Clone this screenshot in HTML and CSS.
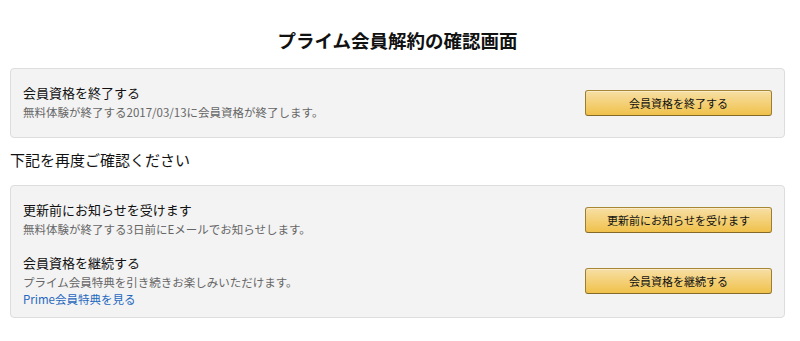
FILE: index.html
```html
<!DOCTYPE html>
<html lang="ja">
<head>
    <meta charset="UTF-8">
    <meta name="viewport" content="width=device-width, initial-scale=1.0">
    <title>プライム会員解約の確認画面</title>
    <link rel="stylesheet" href="styles.css">
</head>
<body>
    <div class="page">
        <h1 class="page-title">プライム会員解約の確認画面</h1>

        <div class="box box-first">
            <div class="row">
                <div class="row-text">
                    <div class="row-heading">会員資格を終了する</div>
                    <div class="row-sub">無料体験が終了する2017/03/13に会員資格が終了します。</div>
                </div>
                <button class="btn">会員資格を終了する</button>
            </div>
        </div>

        <h2 class="section-title">下記を再度ご確認ください</h2>

        <div class="box box-second">
            <div class="row">
                <div class="row-text">
                    <div class="row-heading">更新前にお知らせを受けます</div>
                    <div class="row-sub">無料体験が終了する3日前にEメールでお知らせします。</div>
                </div>
                <button class="btn">更新前にお知らせを受けます</button>
            </div>
            <div class="row">
                <div class="row-text">
                    <div class="row-heading">会員資格を継続する</div>
                    <div class="row-sub">プライム会員特典を引き続きお楽しみいただけます。</div>
                    <a class="row-link" href="#">Prime会員特典を見る</a>
                </div>
                <button class="btn">会員資格を継続する</button>
            </div>
        </div>
    </div>
</body>
</html>
```

FILE: styles.css
```css
* {
    margin: 0;
    padding: 0;
    box-sizing: border-box;
}

body {
    background-color: #fff;
    color: #111;
    font-family: "Noto Sans CJK JP", "Noto Sans", sans-serif;
}

.page {
    padding: 0 15px 0 10px;
}

.page-title {
    font-size: 18.5px;
    font-weight: bold;
    text-align: center;
    line-height: 28px;
    padding-top: 26px;
    height: 68px;
}

.box {
    background-color: #f3f3f3;
    border: 1px solid #dddddd;
    border-radius: 4px;
    padding: 14px 12px 16px 12px;
}

.box-second {
    padding-bottom: 10px;
}

.box-second .row + .row {
    margin-top: 15px;
}

.row {
    display: flex;
    align-items: center;
    justify-content: space-between;
}

.row-heading {
    font-size: 13px;
    line-height: 20px;
    color: #111;
}

.row-sub {
    font-size: 11.5px;
    line-height: 18px;
    color: #666;
}

.row-link {
    display: block;
    font-size: 11.5px;
    line-height: 16px;
    color: #1f68c0;
    text-decoration: none;
}

.btn {
    width: 187px;
    height: 26px;
    margin-top: 2px;
    border: 1px solid;
    border-color: #a88734 #9c7e31 #846a29;
    border-radius: 3px;
    background: linear-gradient(to bottom, #f7dfa5, #f0c14b);
    box-shadow: inset 0 1px 0 rgba(255, 255, 255, 0.4);
    color: #111;
    font-family: inherit;
    font-size: 11px;
    cursor: pointer;
}

.section-title {
    font-size: 15px;
    font-weight: normal;
    line-height: 20px;
    padding: 12px 0 15px;
}
```
